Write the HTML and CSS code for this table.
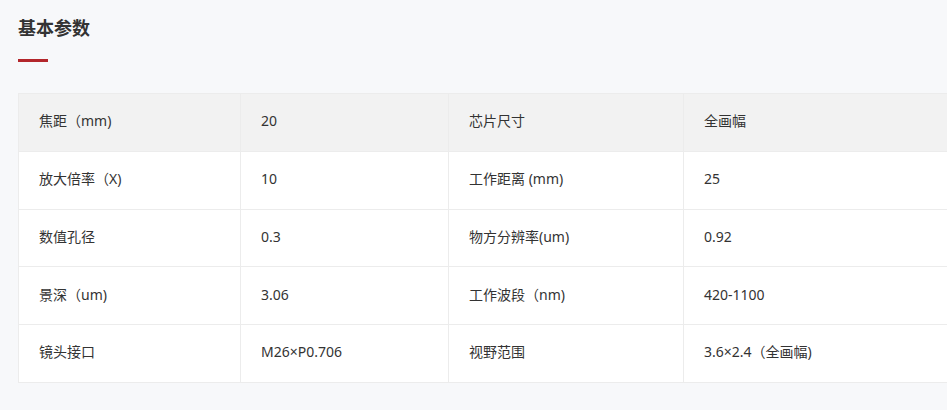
FILE: index.html
```html
<!DOCTYPE html>
<html lang="zh-CN">
<head>
<meta charset="utf-8">
<title>基本参数</title>
<link rel="stylesheet" href="styles.css">
</head>
<body>
<section class="params">
  <h2 class="params-title">基本参数</h2>
  <div class="params-bar"></div>
  <table class="params-table">
    <colgroup>
      <col class="c1"><col class="c2"><col class="c3"><col class="c4">
    </colgroup>
    <tbody>
      <tr class="head"><td>焦距（mm)</td><td>20</td><td>芯片尺寸</td><td>全画幅</td></tr>
      <tr><td>放大倍率（X)</td><td>10</td><td>工作距离 (mm)</td><td>25</td></tr>
      <tr><td>数值孔径</td><td>0.3</td><td>物方分辨率(um)</td><td>0.92</td></tr>
      <tr><td>景深（um)</td><td>3.06</td><td>工作波段（nm)</td><td>420-1100</td></tr>
      <tr><td>镜头接口</td><td>M26×P0.706</td><td>视野范围</td><td>3.6×2.4（全画幅)</td></tr>
    </tbody>
  </table>
</section>
</body>
</html>
```
FILE: styles.css
```css
html, body {
  margin: 0;
  padding: 0;
  background: #f7f8fa;
  overflow: hidden;
}
body {
  font-family: "Noto Sans", "Noto Sans CJK SC", sans-serif;
  color: #333;
}
.params {
  padding: 15px 0 0 18px;
  width: 1200px;
}
.params-title {
  margin: 0;
  font-size: 18px;
  line-height: 26px;
  font-weight: bold;
  color: #333;
}
.params-bar {
  width: 30px;
  height: 3px;
  background: #b3262b;
  margin-top: 18px;
}
.params-table {
  margin-top: 31px;
  border-collapse: collapse;
  table-layout: fixed;
  width: 1100px;
  background: #fff;
  font-size: 14px;
}
.c1 { width: 222px; }
.c2 { width: 208px; }
.c3 { width: 235px; }
.c4 { width: 435px; }
.params-table td {
  border: 1px solid #ececec;
  height: 57.75px;
  padding: 0 0 2px 20px;
  box-sizing: border-box;
  vertical-align: middle;
  line-height: 20px;
  color: #333;
}
.params-table tr.head td {
  background: #f2f2f2;
}
```
